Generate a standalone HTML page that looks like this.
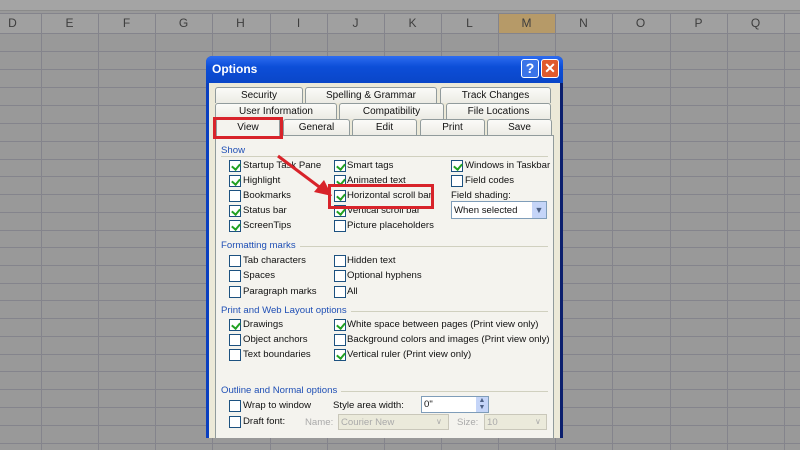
<!DOCTYPE html>
<html><head><style>
*{margin:0;padding:0;box-sizing:border-box}
body{width:800px;height:450px;overflow:hidden;background:#999999;font-family:"Liberation Sans",sans-serif;position:relative}
.a{position:absolute}
.vl{position:absolute;top:14px;bottom:0;width:1px;background:#84848c}
.hl{position:absolute;left:0;right:0;height:1px;background:#84848c}
.ch{position:absolute;top:14px;height:19px;font-size:12px;color:#3e3e3e;text-align:center;line-height:19px;width:57px}
.tab{position:absolute;height:16px;background:linear-gradient(#fbfbf8,#ecebe4);border:1px solid #919b9c;border-bottom:none;border-radius:3px 3px 0 0;font-size:10px;text-align:center;line-height:15px;color:#111}
.t{position:absolute;font-size:9.6px;color:#111;white-space:nowrap}
.cb{position:absolute;width:12px;height:12px;border:1px solid #1c5180;background:#fff}
.cb.k::after{content:"";position:absolute;left:3px;top:1px;width:4px;height:6px;border:solid #21a121;border-width:0 2px 2px 0;transform:rotate(40deg)}
.sec{position:absolute;font-size:9.6px;color:#1f4fb5;background:#f4f3ee;padding-right:4px}
.sl{position:absolute;height:1px;background:#d0d0bf;left:221px;width:327px}
.g{color:#aaa}
</style></head><body>
<div class="a" style="left:0;top:0;width:800px;height:11px;background:#a4a4a4;border-bottom:1px solid #8a8a8a"></div>
<div class="a" style="left:0;top:14px;width:800px;height:19px;background:#a0a0a0"></div>
<div class="a" style="left:498px;top:14px;width:57px;height:19px;background:#b69a68"></div>
<div class="hl" style="top:13px"></div>
<div class="hl" style="top:33px"></div><div class="hl" style="top:51px"></div><div class="hl" style="top:69px"></div><div class="hl" style="top:87px"></div><div class="hl" style="top:105px"></div><div class="hl" style="top:123px"></div><div class="hl" style="top:141px"></div><div class="hl" style="top:159px"></div><div class="hl" style="top:176px"></div><div class="hl" style="top:194px"></div><div class="hl" style="top:212px"></div><div class="hl" style="top:230px"></div><div class="hl" style="top:247px"></div><div class="hl" style="top:265px"></div><div class="hl" style="top:283px"></div><div class="hl" style="top:300px"></div><div class="hl" style="top:318px"></div><div class="hl" style="top:336px"></div><div class="hl" style="top:354px"></div><div class="hl" style="top:371px"></div><div class="hl" style="top:389px"></div><div class="hl" style="top:407px"></div><div class="hl" style="top:425px"></div><div class="hl" style="top:443px"></div>
<div class="vl" style="left:41px"></div><div class="vl" style="left:98px"></div><div class="vl" style="left:155px"></div><div class="vl" style="left:212px"></div><div class="vl" style="left:270px"></div><div class="vl" style="left:327px"></div><div class="vl" style="left:384px"></div><div class="vl" style="left:441px"></div><div class="vl" style="left:498px"></div><div class="vl" style="left:555px"></div><div class="vl" style="left:612px"></div><div class="vl" style="left:670px"></div><div class="vl" style="left:727px"></div><div class="vl" style="left:784px"></div>
<div class="ch" style="left:-16px;width:57px">D</div><div class="ch" style="left:41px">E</div><div class="ch" style="left:98px">F</div><div class="ch" style="left:155px">G</div><div class="ch" style="left:212px">H</div><div class="ch" style="left:270px">I</div><div class="ch" style="left:327px">J</div><div class="ch" style="left:384px">K</div><div class="ch" style="left:441px">L</div><div class="ch" style="left:498px">M</div><div class="ch" style="left:555px">N</div><div class="ch" style="left:612px">O</div><div class="ch" style="left:670px">P</div><div class="ch" style="left:727px">Q</div>

<div class="a" style="left:206px;top:56px;width:357px;height:382px;background:#0a3fbf;border-radius:6px 6px 0 0"></div>
<div class="a" style="left:206px;top:56px;width:357px;height:27px;background:linear-gradient(#2d6cf0,#0c4ed8 40%,#0a46c8);border-radius:6px 6px 0 0"></div>
<div class="t" style="left:212px;top:62px;font-size:12px;font-weight:bold;color:#fff">Options</div>
<div class="a" style="left:521px;top:59px;width:18px;height:19px;background:#3b74e8;border:1px solid #fff;border-radius:3px;color:#fff;font-size:14px;font-weight:bold;text-align:center;line-height:17px">?</div>
<div class="a" style="left:541px;top:59px;width:18px;height:19px;background:#e05a2d;border:1px solid #fff;border-radius:3px;color:#fff;font-size:14px;font-weight:bold;text-align:center;line-height:17px">✕</div>
<div class="a" style="left:209px;top:83px;width:351px;height:355px;background:#ece9d8"></div>
<div class="a" style="left:560px;top:83px;width:3px;height:355px;background:#0b1f6e"></div>

<div class="tab" style="left:215px;top:87px;width:88px">Security</div>
<div class="tab" style="left:305px;top:87px;width:132px">Spelling &amp; Grammar</div>
<div class="tab" style="left:440px;top:87px;width:111px">Track Changes</div>
<div class="tab" style="left:215px;top:103px;width:122px">User Information</div>
<div class="tab" style="left:339px;top:103px;width:105px">Compatibility</div>
<div class="tab" style="left:446px;top:103px;width:105px">File Locations</div>
<div class="tab" style="left:283px;top:119px;width:67px;height:17px">General</div>
<div class="tab" style="left:352px;top:119px;width:65px;height:17px">Edit</div>
<div class="tab" style="left:420px;top:119px;width:65px;height:17px">Print</div>
<div class="tab" style="left:487px;top:119px;width:65px;height:17px">Save</div>
<div class="a" style="left:215px;top:135px;width:339px;height:303px;background:#f4f3ee;border:1px solid #919b9c;border-bottom:none"></div>
<div class="tab" style="left:216px;top:118px;width:64px;height:19px;background:#f4f3ee;line-height:18px">View</div>
<div class="a" style="left:213px;top:117px;width:70px;height:22px;border:3px solid #d8232a"></div>

<div class="sl" style="top:156px"></div><div class="sec" style="left:221px;top:145px">Show</div>
<div class="cb k" style="left:229px;top:160px"></div><div class="t" style="left:243px;top:160px">Startup Task Pane</div>
<div class="cb k" style="left:229px;top:175px"></div><div class="t" style="left:243px;top:175px">Highlight</div>
<div class="cb" style="left:229px;top:190px"></div><div class="t" style="left:243px;top:190px">Bookmarks</div>
<div class="cb k" style="left:229px;top:205px"></div><div class="t" style="left:243px;top:205px">Status bar</div>
<div class="cb k" style="left:229px;top:220px"></div><div class="t" style="left:243px;top:220px">ScreenTips</div>
<div class="cb k" style="left:334px;top:160px"></div><div class="t" style="left:347px;top:160px">Smart tags</div>
<div class="cb k" style="left:334px;top:175px"></div><div class="t" style="left:347px;top:175px">Animated text</div>
<div class="cb k" style="left:334px;top:190px"></div><div class="t" style="left:347px;top:190px">Horizontal scroll bar</div>
<div class="cb k" style="left:334px;top:205px"></div><div class="t" style="left:347px;top:205px">Vertical scroll bar</div>
<div class="cb" style="left:334px;top:220px"></div><div class="t" style="left:347px;top:220px">Picture placeholders</div>
<div class="cb k" style="left:451px;top:160px"></div><div class="t" style="left:465px;top:160px">Windows in Taskbar</div>
<div class="cb" style="left:451px;top:175px"></div><div class="t" style="left:465px;top:175px">Field codes</div>
<div class="t" style="left:451px;top:190px">Field shading:</div>
<div class="a" style="left:451px;top:201px;width:96px;height:18px;background:#fff;border:1px solid #7f9db9"></div>
<div class="t" style="left:454px;top:205px">When selected</div>
<div class="a" style="left:532px;top:202px;width:14px;height:16px;background:#c5d5f8;color:#4d6185;font-size:9px;text-align:center;line-height:16px">▼</div>
<div class="a" style="left:328px;top:184px;width:106px;height:25px;border:3px solid #d8232a"></div>
<svg class="a" style="left:270px;top:150px" width="70" height="55"><line x1="8" y1="6" x2="52" y2="39" stroke="#d8232a" stroke-width="3"/><polygon points="62,46 44,42 54,30" fill="#d8232a"/></svg>

<div class="sl" style="top:246px"></div><div class="sec" style="left:221px;top:240px">Formatting marks</div>
<div class="cb" style="left:229px;top:255px"></div><div class="t" style="left:243px;top:255px">Tab characters</div>
<div class="cb" style="left:229px;top:270px"></div><div class="t" style="left:243px;top:270px">Spaces</div>
<div class="cb" style="left:229px;top:286px"></div><div class="t" style="left:243px;top:286px">Paragraph marks</div>
<div class="cb" style="left:334px;top:255px"></div><div class="t" style="left:347px;top:255px">Hidden text</div>
<div class="cb" style="left:334px;top:270px"></div><div class="t" style="left:347px;top:270px">Optional hyphens</div>
<div class="cb" style="left:334px;top:286px"></div><div class="t" style="left:347px;top:286px">All</div>

<div class="sl" style="top:311px"></div><div class="sec" style="left:221px;top:305px">Print and Web Layout options</div>
<div class="cb k" style="left:229px;top:319px"></div><div class="t" style="left:243px;top:319px">Drawings</div>
<div class="cb" style="left:229px;top:334px"></div><div class="t" style="left:243px;top:334px">Object anchors</div>
<div class="cb" style="left:229px;top:349px"></div><div class="t" style="left:243px;top:349px">Text boundaries</div>
<div class="cb k" style="left:334px;top:319px"></div><div class="t" style="left:347px;top:319px">White space between pages (Print view only)</div>
<div class="cb" style="left:334px;top:334px"></div><div class="t" style="left:347px;top:334px">Background colors and images (Print view only)</div>
<div class="cb k" style="left:334px;top:349px"></div><div class="t" style="left:347px;top:349px">Vertical ruler (Print view only)</div>

<div class="sl" style="top:391px"></div><div class="sec" style="left:221px;top:385px">Outline and Normal options</div>
<div class="cb" style="left:229px;top:400px"></div><div class="t" style="left:243px;top:400px">Wrap to window</div>
<div class="cb" style="left:229px;top:416px"></div><div class="t" style="left:243px;top:416px">Draft font:</div>
<div class="t" style="left:333px;top:400px">Style area width:</div>
<div class="a" style="left:421px;top:396px;width:68px;height:17px;background:#fff;border:1px solid #7f9db9"></div>
<div class="t" style="left:424px;top:399px">0"</div>
<div class="a" style="left:476px;top:397px;width:12px;height:15px;background:#c5d5f8;color:#4d6185;font-size:7px;text-align:center;line-height:7px">▲<br>▼</div>
<div class="t g" style="left:305px;top:417px">Name:</div>
<div class="a" style="left:338px;top:414px;width:111px;height:16px;background:#ebeadb;border:1px solid #c9c7ba"></div>
<div class="t g" style="left:341px;top:417px">Courier New</div>
<div class="t g" style="left:436px;top:417px;font-size:8px">∨</div>
<div class="t g" style="left:457px;top:417px">Size:</div>
<div class="a" style="left:484px;top:414px;width:63px;height:16px;background:#ebeadb;border:1px solid #c9c7ba"></div>
<div class="t g" style="left:487px;top:417px">10</div>
<div class="t g" style="left:535px;top:417px;font-size:8px">∨</div>
</body></html>
